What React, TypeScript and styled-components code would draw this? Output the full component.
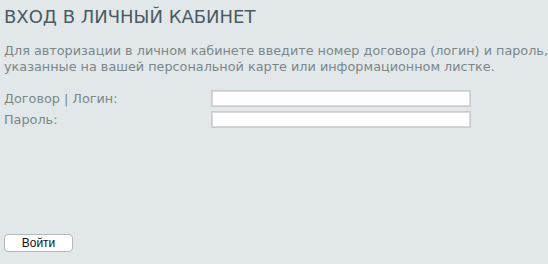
import React from "react";
import styled, { createGlobalStyle } from "styled-components";

const Global = createGlobalStyle`
  html, body { margin: 0; padding: 0; background: #e2e7e9; }
  body { font-family: "DejaVu Sans", Verdana, sans-serif; }
`;

const Page = styled.div`
  width: 548px;
  height: 264px;
  box-sizing: border-box;
  padding: 5px 0 0 4px;
  display: flex;
  flex-direction: column;
  overflow: hidden;
`;

const Title = styled.h1`
  margin: 0;
  font-size: 18px;
  line-height: 24px;
  font-weight: normal;
  color: #4a5b63;
`;

const Intro = styled.p`
  margin: 14px 0 0 0;
  font-size: 12.8px;
  line-height: 16px;
  color: #7a8889;
  white-space: nowrap;
`;

const Form = styled.div`
  margin-top: 15px;
  display: grid;
  grid-template-columns: 207px 260px;
  row-gap: 4px;
  align-items: center;
`;

const Label = styled.label`
  font-size: 12.8px;
  line-height: 17px;
  color: #7a8889;
`;

const Input = styled.input`
  box-sizing: border-box;
  width: 260px;
  height: 17px;
  margin: 0;
  padding: 0 3px;
  border: 1px solid #c9cccc;
  box-shadow: inset 0 0 0 1px #d8dada;
  background: #fff;
  outline: none;
`;

const Button = styled.button`
  margin-top: 106px;
  align-self: flex-start;
  box-sizing: border-box;
  width: 69px;
  height: 18px;
  padding: 0;
  border: 1px solid #b4b8b8;
  border-radius: 4px;
  background: #fff;
  font-family: "Liberation Sans", Arial, sans-serif;
  font-size: 12px;
  color: #111;
  cursor: pointer;
`;

export default function App() {
  return (
    <>
      <Global />
      <Page>
        <Title>ВХОД В ЛИЧНЫЙ КАБИНЕТ</Title>
        <Intro>
          Для авторизации в личном кабинете введите номер договора (логин) и пароль,
          <br />
          указанные на вашей персональной карте или информационном листке.
        </Intro>
        <Form>
          <Label htmlFor="login">Договор | Логин:</Label>
          <Input id="login" type="text" />
          <Label htmlFor="pass">Пароль:</Label>
          <Input id="pass" type="password" />
        </Form>
        <Button>Войти</Button>
      </Page>
    </>
  );
}
